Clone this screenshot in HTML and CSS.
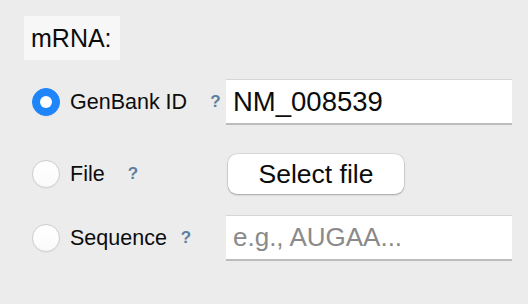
FILE: index.html
```html
<!DOCTYPE html>
<html>
<head>
<meta charset="utf-8">
<link rel="stylesheet" href="styles.css">
</head>
<body>
<div class="panel">
  <div class="heading">mRNA:</div>
  <div class="row row-first">
    <div class="choice">
      <span class="radio radio-on"></span>
      <span class="label">GenBank ID</span>
      <span class="help help-genbank">?</span>
    </div>
    <div class="field"><span class="value">NM_008539</span></div>
  </div>
  <div class="row row-second">
    <div class="choice">
      <span class="radio"></span>
      <span class="label">File</span>
      <span class="help help-file">?</span>
    </div>
    <div class="button">Select file</div>
  </div>
  <div class="row row-third">
    <div class="choice">
      <span class="radio"></span>
      <span class="label">Sequence</span>
      <span class="help help-seq">?</span>
    </div>
    <div class="field"><span class="placeholder">e.g., AUGAA...</span></div>
  </div>
</div>
</body>
</html>
```

FILE: styles.css
```css
* { box-sizing: border-box; }
html, body { margin: 0; padding: 0; }
body {
  background: #ececec;
  font-family: "Liberation Sans", Arial, sans-serif;
  color: #0c0c0c;
  width: 528px;
  height: 304px;
  overflow: hidden;
}
.panel {
  padding: 16px 0 0 24px;
}
.heading {
  display: inline-flex;
  align-items: center;
  width: 96px;
  height: 44px;
  padding-left: 7px;
  background: #f7f7f7;
  font-size: 25px;
}
.row {
  display: flex;
  align-items: center;
  height: 46px;
}
.row-first { margin-top: 19px; }
.row-second { margin-top: 26px; }
.row-third { margin-top: 18px; }
.choice {
  display: flex;
  align-items: center;
  width: 202px;
  padding-left: 8px;
}
.radio {
  width: 28px;
  height: 28px;
  border-radius: 50%;
  background: linear-gradient(#ffffff, #fafafa);
  border: 1px solid #cfcfcf;
  box-shadow: 0 0.5px 1px rgba(0,0,0,0.08);
  flex: none;
  position: relative;
}
.radio-on {
  background: #1f85fb;
  border-color: #1f85fb;
}
.radio-on::after {
  content: "";
  position: absolute;
  left: 7px;
  top: 7px;
  width: 12px;
  height: 12px;
  border-radius: 50%;
  background: #fff;
}
.label {
  margin-left: 10px;
  font-size: 21.5px;
}
.help {
  font-size: 17px;
  font-weight: bold;
  color: #5d7f9f;
}
.help-genbank { margin-left: 23px; }
.help-file { margin-left: 23px; }
.help-seq { margin-left: 14px; }
.field {
  width: 286px;
  height: 46px;
  background: #fff;
  border-top: 1px solid #d6d6d6;
  border-bottom: 2px solid #bcbcbc;
  display: flex;
  align-items: center;
  padding-left: 7px;
  font-size: 26px;
}
.value { font-size: 27.5px; }
.placeholder { color: #8a8a8a; }
.button {
  margin-left: 2px;
  width: 176px;
  height: 40px;
  background: #fff;
  border-radius: 9px;
  box-shadow: 0 0 0 0.5px rgba(0,0,0,0.15), 0 1px 2px rgba(0,0,0,0.25);
  display: flex;
  align-items: center;
  justify-content: center;
  font-size: 26.5px;
}
```
